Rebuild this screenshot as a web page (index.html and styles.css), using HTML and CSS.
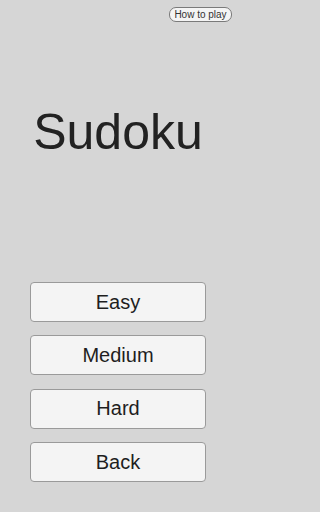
FILE: index.html
```html
<!DOCTYPE html>
<html>
<head>
<meta charset="utf-8">
<link rel="stylesheet" href="styles.css">
</head>
<body>
<div class="screen">
  <div class="topbar">
    <button class="help">How to play</button>
  </div>
  <h1 class="title">Sudoku</h1>
  <div class="menu">
    <button class="item">Easy</button>
    <button class="item">Medium</button>
    <button class="item">Hard</button>
    <button class="item">Back</button>
  </div>
</div>
</body>
</html>
```
FILE: styles.css
```css
html, body {
  margin: 0;
  padding: 0;
  background: #d6d6d6;
}
.screen {
  width: 236px;
  height: 512px;
  display: flex;
  flex-direction: column;
  font-family: "Liberation Sans", Arial, sans-serif;
  color: #222;
}
.topbar {
  display: flex;
  justify-content: flex-end;
  padding: 7px 4px 0 0;
}
.help {
  height: 15px;
  width: 63px;
  padding: 0;
  border: 1px solid #7a7a7a;
  border-radius: 7px;
  background: #f4f4f4;
  font-family: "Liberation Sans", Arial, sans-serif;
  font-size: 10px;
  color: #333;
  line-height: 13px;
}
.title {
  margin: 80px 0 0 0;
  height: 60px;
  font-size: 50px;
  font-weight: normal;
  line-height: 60px;
  text-align: center;
  color: #222;
}
.menu {
  margin-top: 120px;
  display: flex;
  flex-direction: column;
  gap: 13.4px;
  padding: 0 30px;
}
.item {
  height: 40px;
  width: 176px;
  border: 1px solid #9a9a9a;
  border-radius: 4px;
  background: #f4f4f4;
  font-family: "Liberation Sans", Arial, sans-serif;
  font-size: 20px;
  color: #1e1e1e;
  padding: 0;
}
```
